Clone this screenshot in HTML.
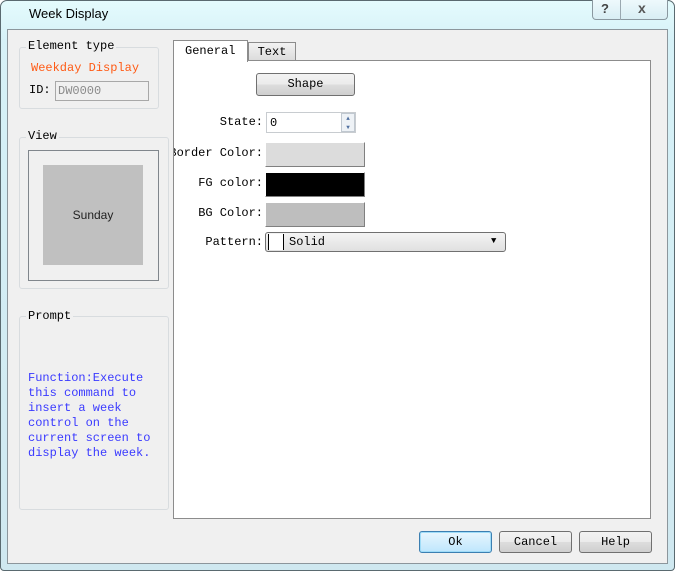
<!DOCTYPE html>
<html><head><meta charset="utf-8"><style>
*{margin:0;padding:0;box-sizing:border-box}
body{width:675px;height:571px;overflow:hidden;background:#fff;font-family:"Liberation Mono","Noto Sans CJK SC",monospace;font-size:12px;color:#000;position:relative}
.a{position:absolute}
#frame{left:0;top:0;width:675px;height:571px;border:1px solid #5a6a70;border-radius:7px 7px 4px 4px;background:linear-gradient(#e4fbfd,#d6f1f7 40px,#cfe8f0)}
#title{left:29px;top:6px;font-family:"Liberation Sans",sans-serif;font-size:13px;color:#000}
#client{left:7px;top:29px;width:661px;height:535px;background:#f0f0f0;border:1px solid #8c969c}
.grp{border:1px solid #d8dcdf;border-radius:3px}
.lbl{background:#f0f0f0;padding:0 2px}
.btn{border:1px solid #707070;border-radius:3px;background:linear-gradient(#f2f2f2 0,#ebebeb 50%,#dddddd 51%,#cfcfcf);text-align:center;font-size:12px}
.r{text-align:right;width:95px;white-space:nowrap}
</style></head><body>
<div id="frame" class="a"></div>
<div id="title" class="a">Week Display</div>
<div class="a" style="left:592px;top:0;width:76px;height:20px;border:1px solid #8a98a0;border-top:none;border-radius:0 0 4px 4px;background:linear-gradient(#eef9fc,#d8eef4)"></div>
<div class="a" style="left:620px;top:0;width:1px;height:20px;background:#9aa8b0"></div>
<div class="a" style="left:601px;top:1px;font-family:'Liberation Sans';font-weight:bold;font-size:13px;color:#444">?</div>
<div class="a" style="left:638px;top:0px;font-family:'Liberation Sans';font-weight:bold;font-size:14px;color:#555">x</div>
<div id="client" class="a"></div>

<div class="a grp" style="left:19px;top:47px;width:140px;height:62px"></div>
<div class="a lbl" style="left:26px;top:39px">Element type</div>
<div class="a" style="left:31px;top:61px;color:#ff5a14">Weekday Display</div>
<div class="a" style="left:29px;top:83px">ID:</div>
<div class="a" style="left:55px;top:81px;width:94px;height:20px;border:1px solid #a8a8a8;background:#f0f0f0;color:#8a8a8a;padding:2px 2px">DW0000</div>

<div class="a grp" style="left:19px;top:137px;width:150px;height:152px"></div>
<div class="a lbl" style="left:26px;top:129px">View</div>
<div class="a" style="left:28px;top:150px;width:131px;height:131px;border:1px solid #80868c"></div>
<div class="a" style="left:43px;top:165px;width:100px;height:100px;background:#c0c0c0;font-family:'Liberation Sans';font-size:12px;color:#222;text-align:center;line-height:100px">Sunday</div>

<div class="a grp" style="left:19px;top:316px;width:150px;height:194px"></div>
<div class="a lbl" style="left:26px;top:309px">Prompt</div>
<div class="a" style="left:28px;top:371px;color:#3a3aff;line-height:15px;white-space:pre">Function:Execute
this command to
insert a week
control on the
current screen to
display the week.</div>

<div class="a" style="left:173px;top:60px;width:478px;height:459px;background:#fff;border:1px solid #8c8c8c"></div>
<div class="a" style="left:248px;top:42px;width:48px;height:19px;border:1px solid #8c8c8c;background:linear-gradient(#f2f2f2,#dcdcdc);text-align:center;line-height:18px">Text</div>
<div class="a" style="left:173px;top:40px;width:75px;height:22px;border:1px solid #8c8c8c;border-bottom:none;background:#fff;padding:3px 0 0 11px">General</div>

<div class="a btn" style="left:256px;top:73px;width:99px;height:23px;line-height:21px">Shape</div>

<div class="a r" style="left:168px;top:115px">State:</div>
<div class="a" style="left:266px;top:112px;width:90px;height:21px;border:1px solid #c8ccd0;background:#fff;padding:3px 3px">0</div>
<div class="a" style="left:341px;top:113px;width:14px;height:19px;border:1px solid #c0c8d0;background:#eef2f6;font-size:6px;color:#5070a0;line-height:9px;text-align:center">▲<br>▼</div>

<div class="a" style="left:174px;top:146px;width:89px;height:16px;overflow:hidden"><span class="a" style="right:0;top:0;white-space:nowrap">Border Color:</span></div>
<div class="a" style="left:265px;top:142px;width:100px;height:25px;background:#dcdcdc;border:1px solid #fff;border-right-color:#808080;border-bottom-color:#808080"></div>

<div class="a r" style="left:168px;top:176px">FG color:</div>
<div class="a" style="left:265px;top:172px;width:100px;height:25px;background:#000;border:1px solid #fff;border-right-color:#808080;border-bottom-color:#808080"></div>

<div class="a r" style="left:168px;top:206px">BG Color:</div>
<div class="a" style="left:265px;top:202px;width:100px;height:25px;background:#bebebe;border:1px solid #fff;border-right-color:#808080;border-bottom-color:#808080"></div>

<div class="a r" style="left:168px;top:235px">Pattern:</div>
<div class="a" style="left:265px;top:232px;width:241px;height:20px;border:1px solid #707070;border-radius:3px;background:linear-gradient(#f4f4f4,#e0e0e0)"></div>
<div class="a" style="left:268px;top:234px;width:16px;height:16px;background:#fff;border-left:1px solid #000;border-right:1px solid #000"></div>
<div class="a" style="left:289px;top:235px">Solid</div>
<div class="a" style="left:491px;top:236px;font-size:9px">▼</div>

<div class="a" style="left:419px;top:531px;width:73px;height:22px;border:1px solid #3c7fb1;border-radius:3px;background:linear-gradient(#e8f6fd,#bee6fd);box-shadow:inset 0 0 0 1px #9fdcf8;text-align:center;line-height:20px">Ok</div>
<div class="a btn" style="left:499px;top:531px;width:73px;height:22px;line-height:20px">Cancel</div>
<div class="a btn" style="left:579px;top:531px;width:73px;height:22px;line-height:20px">Help</div>
</body></html>
